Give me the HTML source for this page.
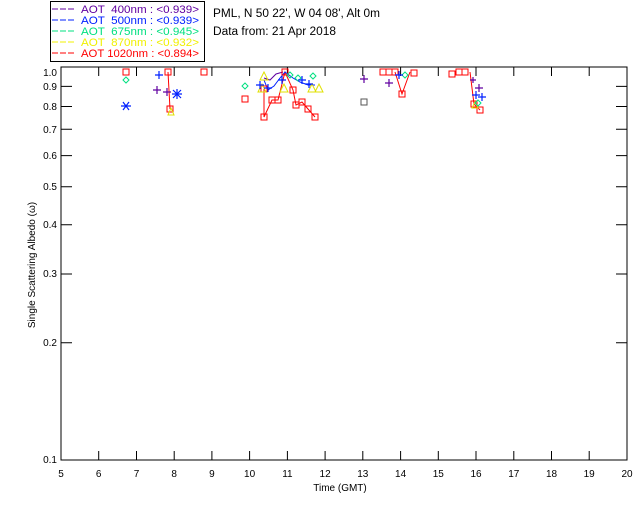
<!DOCTYPE html>
<html><head><style>
body{margin:0;background:#fff;width:640px;height:512px;overflow:hidden}
svg{display:block;font-family:"Liberation Sans",sans-serif}
</style></head><body>
<svg width="640" height="512" viewBox="0 0 640 512">
<rect x="50.5" y="1.5" width="154" height="60" fill="#fff" stroke="#000"/>
<g font-size="11">
<line x1="52" y1="9" x2="76" y2="9" stroke="#6000a0" stroke-dasharray="6,2"/><text x="81" y="13" fill="#6000a0" xml:space="preserve" textLength="118" lengthAdjust="spacingAndGlyphs">AOT  400nm : &lt;0.939&gt;</text>
<line x1="52" y1="20" x2="76" y2="20" stroke="#0020ff" stroke-dasharray="6,2"/><text x="81" y="24" fill="#0020ff" xml:space="preserve" textLength="118" lengthAdjust="spacingAndGlyphs">AOT  500nm : &lt;0.939&gt;</text>
<line x1="52" y1="31" x2="76" y2="31" stroke="#00e080" stroke-dasharray="6,2"/><text x="81" y="35" fill="#00e080" xml:space="preserve" textLength="118" lengthAdjust="spacingAndGlyphs">AOT  675nm : &lt;0.945&gt;</text>
<line x1="52" y1="42" x2="76" y2="42" stroke="#f0f000" stroke-dasharray="6,2"/><text x="81" y="46" fill="#f0f000" xml:space="preserve" textLength="118" lengthAdjust="spacingAndGlyphs">AOT  870nm : &lt;0.932&gt;</text>
<line x1="52" y1="53" x2="76" y2="53" stroke="#ff0000" stroke-dasharray="6,2"/><text x="81" y="57" fill="#ff0000" xml:space="preserve" textLength="118" lengthAdjust="spacingAndGlyphs">AOT 1020nm : &lt;0.894&gt;</text>
</g>
<text x="213" y="17" font-size="11.5" textLength="167" lengthAdjust="spacingAndGlyphs">PML, N 50 22', W 04 08', Alt 0m</text>
<text x="213" y="35" font-size="11.5" textLength="123" lengthAdjust="spacingAndGlyphs">Data from: 21 Apr 2018</text>
<rect x="61" y="67" width="566" height="393" fill="none" stroke="#000"/>
<g stroke="#000">
<path d="M98.7 460v-9M136.5 460v-9M174.2 460v-9M211.9 460v-9M249.6 460v-9M287.4 460v-9M325.1 460v-9M362.8 460v-9M400.6 460v-9M438.3 460v-9M476 460v-9M513.8 460v-9M551.5 460v-9M589.2 460v-9"/>
<path d="M98.7 67v9M136.5 67v9M174.2 67v9M211.9 67v9M249.6 67v9M287.4 67v9M325.1 67v9M362.8 67v9M400.6 67v9M438.3 67v9M476 67v9M513.8 67v9M551.5 67v9M589.2 67v9"/>
<path d="M61 342.7h11M61 274h11M61 224.8h11M61 186.7h11M61 155.6h11M61 129.3h11M61 106.5h11M61 86.4h11M616 342.7h11M616 274h11M616 224.8h11M616 186.7h11M616 155.6h11M616 129.3h11M616 106.5h11M616 86.4h11"/>
</g>
<g font-size="10" text-anchor="end">
<text x="57" y="463">0.1</text><text x="57" y="346">0.2</text><text x="57" y="277">0.3</text><text x="57" y="228">0.4</text><text x="57" y="190">0.5</text><text x="57" y="159">0.6</text><text x="57" y="133">0.7</text><text x="57" y="110">0.8</text><text x="57" y="90">0.9</text><text x="57" y="76">1.0</text>
</g>
<g font-size="10" text-anchor="middle">
<text x="61" y="477">5</text><text x="98.7" y="477">6</text><text x="136.5" y="477">7</text><text x="174.2" y="477">8</text><text x="211.9" y="477">9</text><text x="249.6" y="477">10</text><text x="287.4" y="477">11</text><text x="325.1" y="477">12</text><text x="362.8" y="477">13</text><text x="400.6" y="477">14</text><text x="438.3" y="477">15</text><text x="476" y="477">16</text><text x="513.8" y="477">17</text><text x="551.5" y="477">18</text><text x="589.2" y="477">19</text><text x="627" y="477">20</text>
<text x="340" y="491">Time (GMT)</text>
</g>
<text transform="translate(35,265) rotate(-90)" font-size="10" text-anchor="middle">Single Scattering Albedo (ω)</text>
<g fill="none" stroke-width="1">
<polyline stroke="#f00" points="168,72 170,109"/>
<polyline stroke="#f00" points="264,89 264,117 272,100 278,100 285,72 293,90 296,105 302,102 308,109 315,117"/>
<polyline stroke="#f00" points="395,72 402,94 410,72"/>
<polyline stroke="#f00" points="470,72 474,104 480,110"/>
<polyline stroke="#0020ff" points="264,80 268,90 274,86 280,78 285,72 293,78 300,82 308,85 315,85"/>
<polyline stroke="#6000a0" points="264,78 270,80 276,74 283,72"/>
</g>
<g fill="none" stroke="#f00">
<rect x="123" y="69" width="6" height="6"/><rect x="165" y="69" width="6" height="6"/><rect x="167" y="106" width="6" height="6"/><rect x="201" y="69" width="6" height="6"/><rect x="242" y="96" width="6" height="6"/><rect x="261" y="86" width="6" height="6"/><rect x="261" y="114" width="6" height="6"/><rect x="269" y="97" width="6" height="6"/><rect x="275" y="97" width="6" height="6"/><rect x="282" y="69" width="6" height="6"/><rect x="290" y="87" width="6" height="6"/><rect x="293" y="102" width="6" height="6"/><rect x="299" y="99" width="6" height="6"/><rect x="305" y="106" width="6" height="6"/><rect x="312" y="114" width="6" height="6"/>
<rect x="380" y="69" width="6" height="6"/><rect x="386" y="69" width="6" height="6"/><rect x="392" y="69" width="6" height="6"/><rect x="399" y="91" width="6" height="6"/><rect x="411" y="70" width="6" height="6"/><rect x="449" y="71" width="6" height="6"/><rect x="456" y="69" width="6" height="6"/><rect x="462" y="69" width="6" height="6"/><rect x="471" y="101" width="6" height="6"/><rect x="477" y="107" width="6" height="6"/>
</g>
<rect x="361" y="99" width="6" height="6" fill="none" stroke="#555"/>
<g fill="none" stroke="#e0e000">
<path d="M260 80l4-8 4 8zM258 92l4-8 4 8zM280 92l4-8 4 8zM308 92l4-8 4 8zM315 92l4-8 4 8zM168 115l3-7 3 7zM472 108l3-6 3 6z"/>
</g>
<g fill="none" stroke="#00e080">
<path d="M126 77l3 3-3 3-3-3zM290 72l3 3-3 3-3-3zM298 75l3 3-3 3-3-3zM313 73l3 3-3 3-3-3zM245 83l3 3-3 3-3-3zM405 72l3 3-3 3-3-3zM478 100l3 3-3 3-3-3z"/>
</g>
<g stroke="#0020ff" stroke-width="1.2">
<path d="M126 106h-5M126 106h5M126 106l-3-4M126 106l3-4M126 106l-3 4M126 106l3 4"/>
<path d="M172 94h10M177 89v10M173 90l8 8M181 90l-8 8"/>
<path d="M155 75h8M159 71v8M256 85h8M260 81v8M264 88h8M268 84v8M278 80h8M282 76v8M298 80h8M302 76v8M305 84h8M309 80v8M395 75h8M399 71v8M472 95h8M476 91v8M478 97h8M482 93v8"/>
</g>
<g stroke="#6000a0" stroke-width="1.2">
<path d="M153 90h8M157 86v8M163 92h8M167 88v8M360 79h8M364 75v8M385 83h8M389 79v8M475 88h8M479 84v8M470 80h6M473 77v6"/>
</g>
</svg>
</body></html>
